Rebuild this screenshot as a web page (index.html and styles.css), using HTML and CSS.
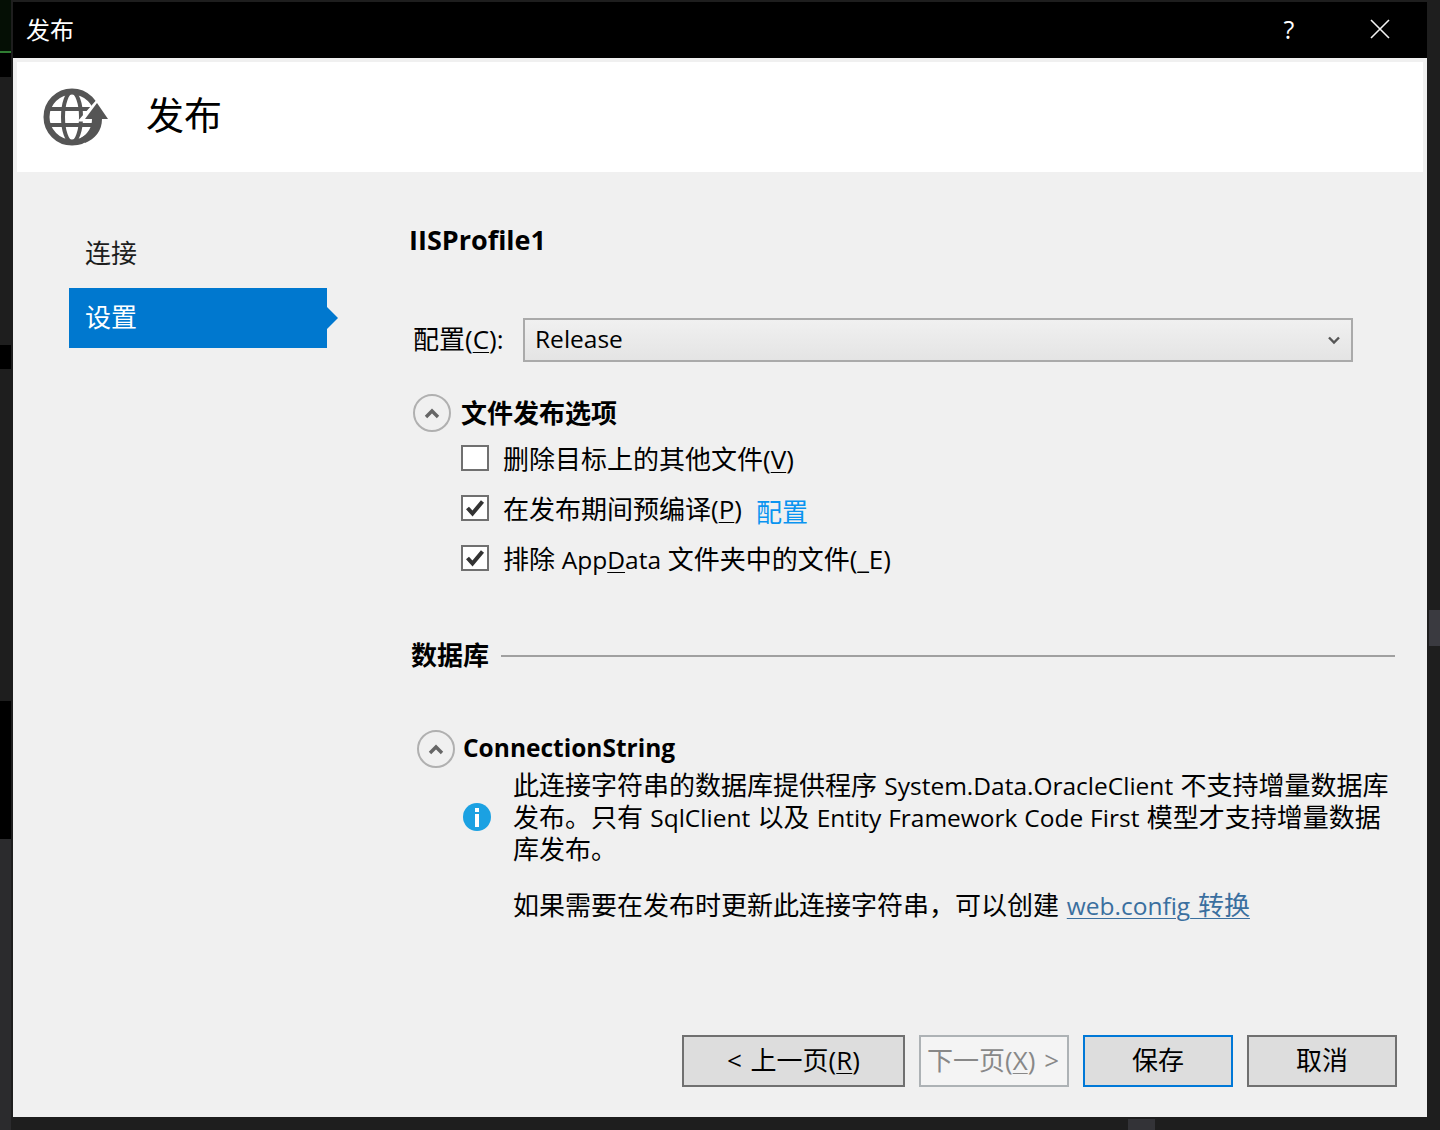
FILE: index.html
```html
<!DOCTYPE html>
<html lang="zh-CN">
<head>
  <meta charset="UTF-8" />
  <title>发布</title>
  <link rel="stylesheet" href="styles.css">
</head>
<body>
  <!-- Bits of the IDE behind the dialog -->
  <div class="bg-piece bg-green"></div>
  <div class="bg-piece bg-black1"></div>
  <div class="bg-piece bg-black2"></div>
  <div class="bg-piece bg-black3"></div>
  <div class="bg-piece bg-panel"></div>
  <div class="bg-piece bg-thumb"></div>
  <div class="bg-piece bg-tab"></div>

  <div class="dialog">
    <div class="titlebar">
      <span class="titlebar-text">发布</span>
      <span class="help-btn">?</span>
      <svg class="close-btn" width="20" height="20" viewBox="0 0 20 20">
        <path d="M1 1 L19 19 M19 1 L1 19" stroke="#f2f2f2" stroke-width="1.6" fill="none" />
      </svg>
    </div>

    <div class="banner">
      <svg class="banner-icon" width="66" height="58" viewBox="0 0 66 58">
        <circle cx="29" cy="29" r="25.5" fill="#fff" stroke="#555" stroke-width="6" />
        <ellipse cx="29" cy="29" rx="9" ry="25" fill="none" stroke="#555" stroke-width="4" />
        <path d="M5 21 H53 M5 37 H53" stroke="#555" stroke-width="4" fill="none" />
        <path d="M40 31 L54 15 L65 31 Z" fill="#fff" stroke="#fff" stroke-width="5" />
        <path d="M42 31 L54 15 L65 31 H59 C59 43 52 51 42 55 L38 50 C45 46 49 39 49 31 Z" fill="#555" />
      </svg>
      <h1>发布</h1>
    </div>

    <div class="main">
      <nav class="sidebar">
        <a class="nav-item">连接</a>
        <a class="nav-item active">设置</a>
      </nav>

      <div class="content">
        <h2 class="profile-name">IISProfile1</h2>

        <div class="config-row">
          <label>配置(<u>C</u>):</label>
          <div class="select">
            <span class="latin">Release</span>
            <svg width="12" height="9" viewBox="0 0 12 9">
              <path d="M1 1.5 L6 6.5 L11 1.5" stroke="#555" stroke-width="2.4" fill="none" />
            </svg>
          </div>
        </div>

        <div class="section-head">
          <span class="collapse-btn">
            <svg width="16" height="11" viewBox="0 0 16 11"><path d="M2 9 L8 3 L14 9" stroke="#666" stroke-width="3.4" fill="none" /></svg>
          </span>
          <strong>文件发布选项</strong>
        </div>

        <div class="checks">
          <div class="check-row">
            <span class="checkbox"></span>
            <span>删除目标上的其他文件(<u>V</u>)</span>
          </div>
          <div class="check-row">
            <span class="checkbox">
              <svg width="20" height="18" viewBox="0 0 20 18"><path d="M2.5 9 L7.5 14.5 L17.5 2.5" stroke="#333" stroke-width="4" fill="none" /></svg>
            </span>
            <span>在发布期间预编译(<u>P</u>)</span>
            <a class="config-link">配置</a>
          </div>
          <div class="check-row">
            <span class="checkbox">
              <svg width="20" height="18" viewBox="0 0 20 18"><path d="M2.5 9 L7.5 14.5 L17.5 2.5" stroke="#333" stroke-width="4" fill="none" /></svg>
            </span>
            <span>排除 <span class="latin">App<u>D</u>ata</span> 文件夹中的文件(<u>_</u>E)</span>
          </div>
        </div>

        <div class="db-head">
          <strong>数据库</strong>
          <span class="db-line"></span>
        </div>

        <div class="section-head conn-head">
          <span class="collapse-btn">
            <svg width="16" height="11" viewBox="0 0 16 11"><path d="M2 9 L8 3 L14 9" stroke="#666" stroke-width="3.4" fill="none" /></svg>
          </span>
          <strong>ConnectionString</strong>
        </div>

        <div class="notice">
          <svg class="info-icon" width="28" height="28" viewBox="0 0 28 28">
            <circle cx="14" cy="14" r="14" fill="#1ba1e2" />
            <rect x="12" y="5" width="4" height="4" fill="#fff" />
            <rect x="12" y="11" width="4" height="13" fill="#fff" />
          </svg>
          <p>此连接字符串的数据库提供程序 <span class="latin">System.Data.OracleClient</span> 不支持增量数据库发布。只有 <span class="latin">SqlClient</span> 以及 <span class="latin">Entity Framework Code First</span> 模型才支持增量数据库发布。</p>
        </div>
        <p class="transform-note">如果需要在发布时更新此连接字符串，可以创建 <a><span class="latin">web.config</span> 转换</a></p>
      </div>
    </div>

    <div class="footer">
      <button class="btn btn-prev">&lt; 上一页(<u>R</u>)</button>
      <button class="btn btn-next" disabled>下一页(<u>X</u>) &gt;</button>
      <button class="btn btn-save">保存</button>
      <button class="btn">取消</button>
    </div>
  </div>
</body>
</html>
```

FILE: styles.css
```css
* {
  box-sizing: border-box;
}

html, body {
  margin: 0;
  height: 1130px;
  overflow: hidden;
}

body {
  position: relative;
  background: #1e1e1e;
  font-family: "Open Sans", "Noto Sans CJK SC", sans-serif;
  font-size: 26px;
  color: #000;
  padding: 2px 13px 0;
}

u {
  text-underline-offset: 3px;
  text-decoration-thickness: 1px;
}

/* Open Sans runs wider than the original UI font */
.latin {
  font-size: 24.5px;
  line-height: 1;
}

/* background pieces */
.bg-piece {
  position: absolute;
}

.bg-green {
  left: 0; top: 0;
  width: 11px; height: 53px;
  background: #050f05;
  border-bottom: 2px solid #2f7d32;
}

.bg-black1 {
  left: 0; top: 53px;
  width: 11px; height: 24px;
  background: #000;
}

.bg-black2 {
  left: 0; top: 345px;
  width: 11px; height: 24px;
  background: #000;
}

.bg-black3 {
  left: 0; top: 701px;
  width: 11px; height: 138px;
  background: #000;
}

.bg-panel {
  left: 0; top: 839px;
  width: 11px; height: 291px;
  background: #2b2b2d;
}

.bg-thumb {
  left: 1429px; top: 610px;
  width: 11px; height: 36px;
  background: #3a3a40;
}

.bg-tab {
  left: 1128px; top: 1119px;
  width: 27px; height: 11px;
  background: #333337;
}

/* dialog */
.dialog {
  position: relative;
  width: 1414px;
  height: 1115px;
  background: #f0f0f0;
  display: flex;
  flex-direction: column;
}

.titlebar {
  height: 56px;
  background: #000;
  color: #fff;
  display: flex;
  align-items: center;
  flex-shrink: 0;
}

.titlebar-text {
  margin: 0 0 4px 13px;
  font-size: 24px;
}

.help-btn {
  margin-left: auto;
  padding-bottom: 3px;
  font-size: 25px;
  width: 18px;
  text-align: center;
}

.close-btn {
  margin: 0 37px 2px 72px;
}

.banner {
  margin: 4px 4px 0;
  height: 110px;
  background: #fff;
  display: flex;
  align-items: center;
  flex-shrink: 0;
}

.banner-icon {
  margin-left: 26px;
}

.banner h1 {
  margin: 0 0 10px 37px;
  font-size: 38px;
  font-weight: 400;
}

.main {
  display: flex;
  flex: 1;
}

.sidebar {
  width: 397px;
  padding: 51px 0 0 56px;
  display: flex;
  flex-direction: column;
  gap: 5px;
  flex-shrink: 0;
}

.nav-item {
  position: relative;
  width: 258px;
  height: 60px;
  line-height: 60px;
  padding-left: 16px;
  color: #1e1e1e;
}

.nav-item.active {
  line-height: 58px;
  background: #0078cf;
  color: #fff;
}

.nav-item.active::after {
  content: "";
  position: absolute;
  left: 100%;
  top: 19px;
  border-left: 11px solid #0078cf;
  border-top: 11px solid transparent;
  border-bottom: 11px solid transparent;
}

.content {
  flex: 1;
  padding-right: 32px;
}

.profile-name {
  margin: 46px 0 0 -1px;
  font-size: 27px;
  line-height: 44px;
  font-weight: 700;
}

.config-row {
  display: flex;
  align-items: center;
  margin: 56px 0 0 3px;
}

.config-row label {
  width: 110px;
  padding-bottom: 4px;
}

.select {
  width: 830px;
  height: 44px;
  border: 2px solid #aaa;
  background: linear-gradient(#f0f0f0, #e4e4e4);
  display: flex;
  align-items: center;
  justify-content: space-between;
  padding: 0 11px 0 10px;
}

.select .latin {
  padding-bottom: 2px;
}

.section-head {
  display: flex;
  align-items: center;
  margin: 32px 0 0 3px;
  height: 38px;
}

.section-head strong {
  margin-left: 10px;
  padding-bottom: 2px;
  font-size: 26px;
}

.collapse-btn {
  width: 38px;
  height: 38px;
  border: 2px solid #b0b0b0;
  border-radius: 50%;
  display: flex;
  align-items: center;
  justify-content: center;
}

.checks {
  margin: 11px 0 0 51px;
}

.check-row {
  display: flex;
  align-items: center;
  height: 30px;
  margin-bottom: 20px;
}

.checkbox {
  width: 28px;
  height: 26px;
  border: 2px solid #707070;
  background: #fff;
  margin-right: 14px;
  display: flex;
  align-items: center;
  justify-content: center;
  flex-shrink: 0;
}

.config-link {
  color: #0a94f0;
  margin-left: 14px;
  padding-top: 6px;
}

.db-head {
  display: flex;
  align-items: center;
  margin: 63px 0 0 1px;
  height: 40px;
}

.db-head strong {
  font-size: 26px;
  padding-bottom: 4px;
}

.db-line {
  flex: 1;
  height: 2px;
  background: #a0a0a0;
  margin-left: 12px;
}

.conn-head {
  margin: 54px 0 0 7px;
}

.conn-head strong {
  margin-left: 8px;
  padding-bottom: 4px;
  font-size: 24.5px;
}

.notice {
  display: flex;
  align-items: center;
  margin: 1px 0 0 53px;
}

.info-icon {
  flex-shrink: 0;
  margin-right: 22px;
}

.notice p {
  margin: 0;
  line-height: 32px;
  width: 880px;
  word-spacing: 0.5px;
}

.transform-note {
  margin: 24px 0 0 103px;
  line-height: 32px;
  word-spacing: 1px;
}

.transform-note a {
  color: #3a6f9f;
  text-decoration: underline;
  text-underline-offset: 3px;
  text-decoration-thickness: 1px;
}

.footer {
  display: flex;
  justify-content: flex-end;
  gap: 14px;
  padding: 0 30px 30px 0;
  flex-shrink: 0;
}

.btn {
  width: 150px;
  height: 52px;
  border: 2px solid #707070;
  background: #ddd;
  font-family: inherit;
  font-size: 26px;
  color: #000;
  padding: 0 0 4px;
  white-space: nowrap;
}

.btn-prev {
  width: 223px;
  word-spacing: 2px;
}

.btn-next {
  border-color: #adb2b5;
  background: #f4f4f4;
  color: #888;
  word-spacing: 2px;
  padding-right: 2px;
}

.btn-save {
  border-color: #0078d7;
}
```
